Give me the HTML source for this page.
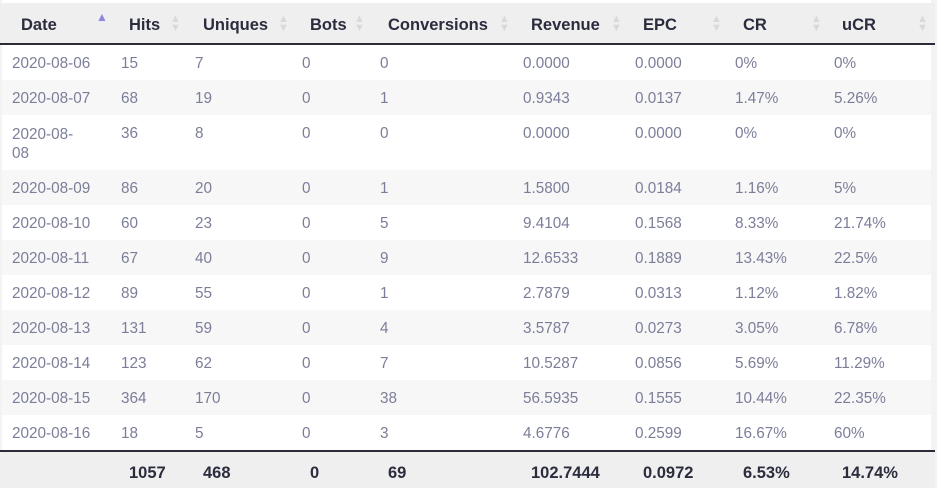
<!DOCTYPE html>
<html><head><meta charset="utf-8"><style>
*{margin:0;padding:0;box-sizing:border-box}
body{width:937px;height:488px;background:#f3f3f4;position:relative;overflow:hidden;font-family:"Liberation Sans",sans-serif}
.tbl{position:absolute;left:2px;top:0;width:929px;height:488px;background:#fff}
.hd{position:absolute;left:0;top:3px;width:935px;height:42px;background:#efeff0;border-bottom:2px solid #2a2c38}
.r{position:absolute;left:0;width:929px;height:35px}
.s{background:#f7f7f8}
.c{position:absolute;font-size:15.3px;color:#7b7e98;top:10px}
.h{position:absolute;font-size:16.5px;font-weight:bold;color:#2b2d3d;top:13px}
.ar{position:absolute;top:12px;font-size:11px;color:#d8d8dd;line-height:9px;width:10px;text-align:center}
.ft{position:absolute;left:0;top:450px;width:935px;height:38px;background:#efeff0;border-top:2px solid #2a2c38}
.f{position:absolute;top:12px;font-size:16.5px;font-weight:bold;color:#2b2d3d}
</style></head><body>
<div class="tbl"></div>
<div class="hd">
<span class="h" style="left:21px">Date</span><span class="ar" style="left:96px;top:10px;font-size:12px;color:#8d87dd">▲</span>
<span class="h" style="left:129px">Hits</span><span class="ar" style="left:170px">▲<br>▼</span>
<span class="h" style="left:203px">Uniques</span><span class="ar" style="left:278px">▲<br>▼</span>
<span class="h" style="left:310px">Bots</span><span class="ar" style="left:354px">▲<br>▼</span>
<span class="h" style="left:388px">Conversions</span><span class="ar" style="left:499px">▲<br>▼</span>
<span class="h" style="left:531px">Revenue</span><span class="ar" style="left:611px">▲<br>▼</span>
<span class="h" style="left:643px">EPC</span><span class="ar" style="left:711px">▲<br>▼</span>
<span class="h" style="left:743px">CR</span><span class="ar" style="left:811px">▲<br>▼</span>
<span class="h" style="left:842px">uCR</span><span class="ar" style="left:917px">▲<br>▼</span>
</div>
<div class="ft">
<span class="f" style="left:129px">1057</span>
<span class="f" style="left:203px">468</span>
<span class="f" style="left:310px">0</span>
<span class="f" style="left:388px">69</span>
<span class="f" style="left:531px">102.7444</span>
<span class="f" style="left:643px">0.0972</span>
<span class="f" style="left:743px">6.53%</span>
<span class="f" style="left:842px">14.74%</span>
</div>
<div style="position:absolute;left:2px;top:45px;width:929px">
<div class="r" style="top:0"><span class="c" style="left:10px">2020-08-06</span><span class="c" style="left:119px">15</span><span class="c" style="left:193px">7</span><span class="c" style="left:300px">0</span><span class="c" style="left:378px">0</span><span class="c" style="left:521px">0.0000</span><span class="c" style="left:633px">0.0000</span><span class="c" style="left:733px">0%</span><span class="c" style="left:832px">0%</span></div>
<div class="r s" style="top:35px"><span class="c" style="left:10px">2020-08-07</span><span class="c" style="left:119px">68</span><span class="c" style="left:193px">19</span><span class="c" style="left:300px">0</span><span class="c" style="left:378px">1</span><span class="c" style="left:521px">0.9343</span><span class="c" style="left:633px">0.0137</span><span class="c" style="left:733px">1.47%</span><span class="c" style="left:832px">5.26%</span></div>
<div class="r" style="top:70px;height:55px"><span class="c" style="left:10px;line-height:19px">2020-08-<br>08</span><span class="c" style="left:119px">36</span><span class="c" style="left:193px">8</span><span class="c" style="left:300px">0</span><span class="c" style="left:378px">0</span><span class="c" style="left:521px">0.0000</span><span class="c" style="left:633px">0.0000</span><span class="c" style="left:733px">0%</span><span class="c" style="left:832px">0%</span></div>
<div class="r s" style="top:125px"><span class="c" style="left:10px">2020-08-09</span><span class="c" style="left:119px">86</span><span class="c" style="left:193px">20</span><span class="c" style="left:300px">0</span><span class="c" style="left:378px">1</span><span class="c" style="left:521px">1.5800</span><span class="c" style="left:633px">0.0184</span><span class="c" style="left:733px">1.16%</span><span class="c" style="left:832px">5%</span></div>
<div class="r" style="top:160px"><span class="c" style="left:10px">2020-08-10</span><span class="c" style="left:119px">60</span><span class="c" style="left:193px">23</span><span class="c" style="left:300px">0</span><span class="c" style="left:378px">5</span><span class="c" style="left:521px">9.4104</span><span class="c" style="left:633px">0.1568</span><span class="c" style="left:733px">8.33%</span><span class="c" style="left:832px">21.74%</span></div>
<div class="r s" style="top:195px"><span class="c" style="left:10px">2020-08-11</span><span class="c" style="left:119px">67</span><span class="c" style="left:193px">40</span><span class="c" style="left:300px">0</span><span class="c" style="left:378px">9</span><span class="c" style="left:521px">12.6533</span><span class="c" style="left:633px">0.1889</span><span class="c" style="left:733px">13.43%</span><span class="c" style="left:832px">22.5%</span></div>
<div class="r" style="top:230px"><span class="c" style="left:10px">2020-08-12</span><span class="c" style="left:119px">89</span><span class="c" style="left:193px">55</span><span class="c" style="left:300px">0</span><span class="c" style="left:378px">1</span><span class="c" style="left:521px">2.7879</span><span class="c" style="left:633px">0.0313</span><span class="c" style="left:733px">1.12%</span><span class="c" style="left:832px">1.82%</span></div>
<div class="r s" style="top:265px"><span class="c" style="left:10px">2020-08-13</span><span class="c" style="left:119px">131</span><span class="c" style="left:193px">59</span><span class="c" style="left:300px">0</span><span class="c" style="left:378px">4</span><span class="c" style="left:521px">3.5787</span><span class="c" style="left:633px">0.0273</span><span class="c" style="left:733px">3.05%</span><span class="c" style="left:832px">6.78%</span></div>
<div class="r" style="top:300px"><span class="c" style="left:10px">2020-08-14</span><span class="c" style="left:119px">123</span><span class="c" style="left:193px">62</span><span class="c" style="left:300px">0</span><span class="c" style="left:378px">7</span><span class="c" style="left:521px">10.5287</span><span class="c" style="left:633px">0.0856</span><span class="c" style="left:733px">5.69%</span><span class="c" style="left:832px">11.29%</span></div>
<div class="r s" style="top:335px"><span class="c" style="left:10px">2020-08-15</span><span class="c" style="left:119px">364</span><span class="c" style="left:193px">170</span><span class="c" style="left:300px">0</span><span class="c" style="left:378px">38</span><span class="c" style="left:521px">56.5935</span><span class="c" style="left:633px">0.1555</span><span class="c" style="left:733px">10.44%</span><span class="c" style="left:832px">22.35%</span></div>
<div class="r" style="top:370px"><span class="c" style="left:10px">2020-08-16</span><span class="c" style="left:119px">18</span><span class="c" style="left:193px">5</span><span class="c" style="left:300px">0</span><span class="c" style="left:378px">3</span><span class="c" style="left:521px">4.6776</span><span class="c" style="left:633px">0.2599</span><span class="c" style="left:733px">16.67%</span><span class="c" style="left:832px">60%</span></div>
</div>
</body></html>
